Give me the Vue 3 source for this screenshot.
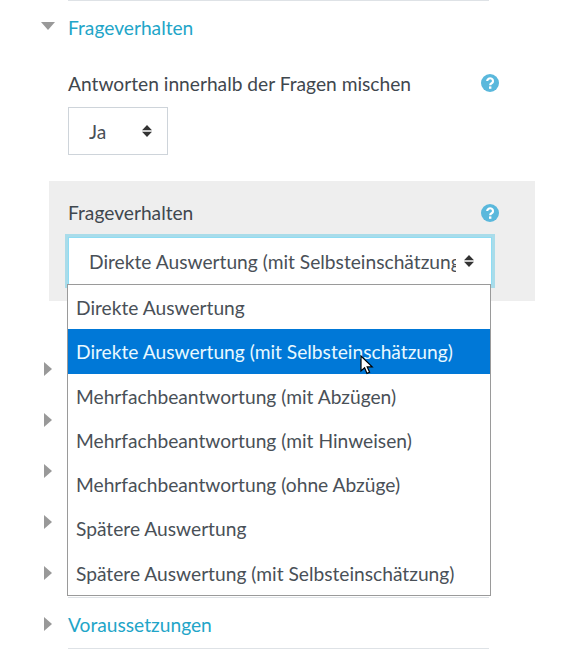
<script setup>
import { ref } from 'vue';

const options = ref([
  'Direkte Auswertung',
  'Direkte Auswertung (mit Selbsteinschätzung)',
  'Mehrfachbeantwortung (mit Abzügen)',
  'Mehrfachbeantwortung (mit Hinweisen)',
  'Mehrfachbeantwortung (ohne Abzüge)',
  'Spätere Auswertung',
  'Spätere Auswertung (mit Selbsteinschätzung)'
]);

const selected = 1;

// die Titel liegen hinter der offenen Liste
const collapsed = ['', '', '', '', '', 'Voraussetzungen'];
</script>

<template>
  <div class="page">
    <section class="section open">
      <div class="head">
        <span class="arrow-down"></span>
        <a class="title">Frageverhalten</a>
      </div>

      <div class="field">
        <div class="label-row">
          <label>Antworten innerhalb der Fragen mischen</label>
          <svg class="help" viewBox="0 0 18 18" width="18" height="18">
            <circle cx="9" cy="9" r="9" fill="#5ab8dc" />
            <path d="M6.2 7a2.9 2.7 0 1 1 4.4 2.3c-1 .6-1.4 1-1.4 2" fill="none" stroke="#fff" stroke-width="2.2" />
            <rect x="8" y="12.4" width="2.4" height="2.4" fill="#fff" />
          </svg>
        </div>
        <div class="select small">
          <span class="value">Ja</span>
          <svg class="updown" viewBox="0 0 10 12" width="10" height="12">
            <path d="M5 0l5 5.200H0zM5 12L0 6.800h10z" fill="#333" />
          </svg>
        </div>
      </div>

      <div class="field highlight">
        <div class="label-row">
          <label>Frageverhalten</label>
          <svg class="help" viewBox="0 0 18 18" width="18" height="18">
            <circle cx="9" cy="9" r="9" fill="#5ab8dc" />
            <path d="M6.2 7a2.9 2.7 0 1 1 4.4 2.3c-1 .6-1.4 1-1.4 2" fill="none" stroke="#fff" stroke-width="2.2" />
            <rect x="8" y="12.4" width="2.4" height="2.4" fill="#fff" />
          </svg>
        </div>
        <div class="select-wrap">
          <div class="select focused">
            <span class="value">{{ options[selected] }}</span>
            <svg class="updown" viewBox="0 0 10 12" width="10" height="12">
              <path d="M5 0l5 5.200H0zM5 12L0 6.800h10z" fill="#333" />
            </svg>
          </div>
          <ul class="dropdown">
            <li v-for="(option, index) in options"
                :key="index"
                :class="{ active: index === selected }">{{ option }}</li>
          </ul>
          <svg class="cursor" viewBox="0 0 14 20" width="14" height="20">
            <path d="M1 1v15l3.6-3.2 2.4 5.6 2.600-1.100-2.400-5.400h5z" fill="#fff" stroke="#000" stroke-width="1.2" />
          </svg>
        </div>
      </div>
    </section>

    <section class="section" v-for="(title, index) in collapsed" :key="index">
      <div class="head closed">
        <span class="arrow-right"></span>
        <a class="title">{{ title }}</a>
      </div>
    </section>
    <div class="end-line"></div>
  </div>
</template>

<style>
body {
  background: #fff;
}
</style>

<style scoped>
.page {
  width: 577px;
  height: 658px;
  overflow: hidden;
  font-family: "Lato", "Noto Sans", sans-serif;
  font-size: 19.2px;
  color: #3f474e;
}

.section {
  margin-left: 68px;
  width: 421px;
  border-top: 1px solid #dee2e6;
  height: 51px;
  box-sizing: border-box;
}

.section.open {
  height: 342px;
}

.head {
  display: flex;
  align-items: center;
  height: 52px;
}

.head.closed {
  height: 52px;
}

.title {
  color: #22a5c8;
}

.arrow-down {
  width: 0;
  height: 0;
  margin-left: -27px;
  margin-right: 13px;
  margin-top: -2px;
  border-left: 7px solid transparent;
  border-right: 7px solid transparent;
  border-top: 8px solid #999;
}

.arrow-right {
  width: 0;
  height: 0;
  margin-left: -24px;
  margin-right: 16px;
  border-top: 7px solid transparent;
  border-bottom: 7px solid transparent;
  border-left: 8px solid #999;
}

.field {
  margin-top: 18px;
}

.label-row {
  display: flex;
  justify-content: space-between;
  align-items: center;
  height: 24px;
  margin-right: -10px;
  margin-bottom: 12px;
}

.select {
  display: flex;
  align-items: center;
  justify-content: space-between;
  box-sizing: border-box;
  border: 1px solid #ced4da;
  background: #fff;
  height: 48px;
  padding: 0 15px 0 20px;
  color: #495057;
}

.select.small {
  width: 100px;
}

.highlight {
  background: #eee;
  margin: 26px -46px 0 -19px;
  padding: 19px 36px 0 19px;
  height: 120px;
  box-sizing: border-box;
}

.highlight .label-row {
  margin-right: 0;
  margin-bottom: 13px;
}

.highlight .help {
  margin-top: 2px;
}

.select-wrap {
  position: relative;
}

.select.focused {
  width: 424px;
  border-color: #8fdcf3;
  box-shadow: 0 0 0 3px #a9dcea;
  padding-right: 17px;
}

.value {
  white-space: nowrap;
  overflow: hidden;
  width: 367px;
}

.updown {
  flex: none;
}

.dropdown {
  position: absolute;
  top: 47px;
  left: -1px;
  width: 424px;
  box-sizing: border-box;
  margin: 0;
  padding: 0;
  list-style: none;
  background: #fff;
  border: 1px solid #9a9a9a;
  z-index: 2;
}

.dropdown li {
  height: 44.3px;
  line-height: 46px;
  padding-left: 8px;
  color: #495057;
  white-space: nowrap;
}

.dropdown li.active {
  background: #0078d7;
  color: #e8f8ff;
}

.cursor {
  position: absolute;
  top: 118px;
  left: 292px;
  z-index: 3;
}

.end-line {
  margin-left: 68px;
  width: 421px;
  border-top: 1px solid #dee2e6;
}
</style>
